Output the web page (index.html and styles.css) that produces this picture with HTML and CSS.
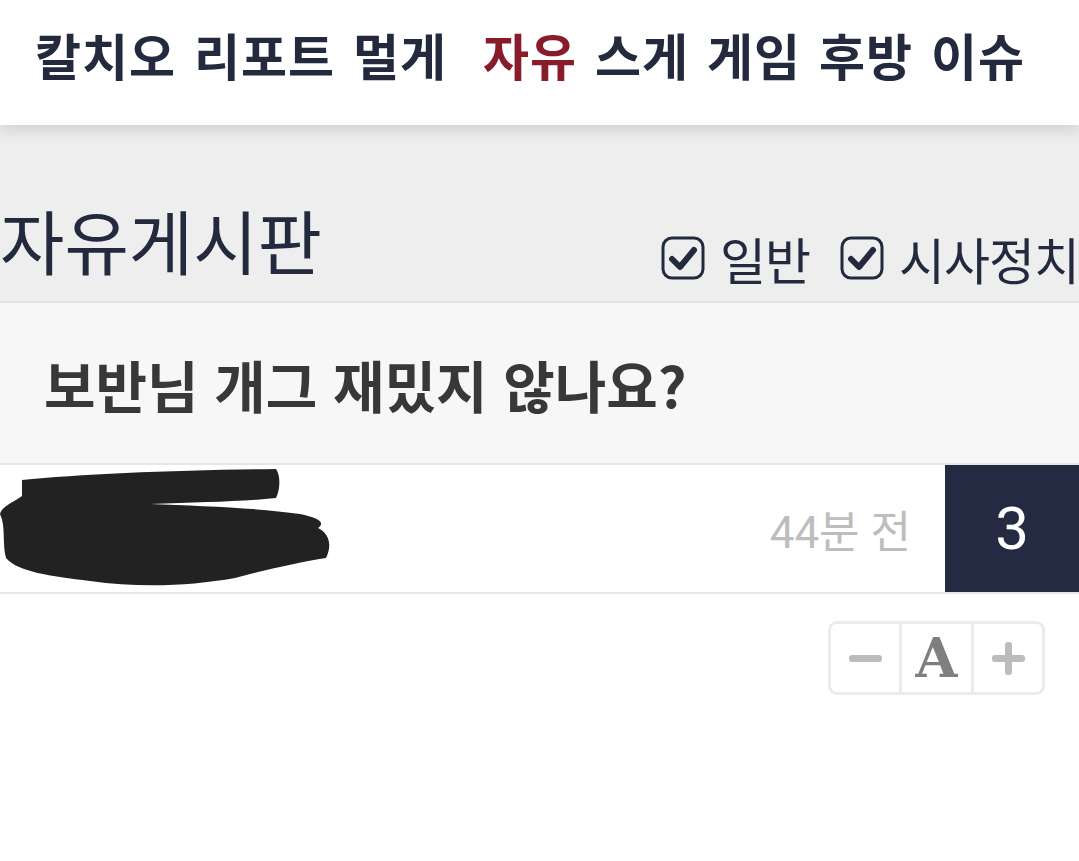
FILE: index.html
```html
<!DOCTYPE html>
<html lang="ko">
<head>
  <meta charset="UTF-8" />
  <meta name="viewport" content="width=device-width, initial-scale=1.0" />
  <title>자유게시판</title>
  <link rel="stylesheet" href="styles.css">
</head>
<body>
  <header class="topnav">
    <a href="#">칼치오</a>
    <a href="#">리포트</a>
    <a href="#">멀게</a>
    <a href="#" class="active">자유</a>
    <a href="#">스게</a>
    <a href="#">게임</a>
    <a href="#">후방</a>
    <a href="#">이슈</a>
  </header>

  <section class="board-head">
    <h1>자유게시판</h1>
    <div class="filters">
      <label class="check">
        <svg viewBox="0 0 44 44" width="44" height="44"><rect x="2" y="2" width="40" height="40" rx="9" fill="none" stroke="#232a3e" stroke-width="3"/><path d="M11 23 L19 31 L33 14" fill="none" stroke="#232a3e" stroke-width="6" stroke-linecap="round" stroke-linejoin="round"/></svg>
        <span>일반</span>
      </label>
      <label class="check">
        <svg viewBox="0 0 44 44" width="44" height="44"><rect x="2" y="2" width="40" height="40" rx="9" fill="none" stroke="#232a3e" stroke-width="3"/><path d="M11 23 L19 31 L33 14" fill="none" stroke="#232a3e" stroke-width="6" stroke-linecap="round" stroke-linejoin="round"/></svg>
        <span>시사정치</span>
      </label>
    </div>
  </section>

  <div class="post-title">
    <h2>보반님 개그 재밌지 않나요?</h2>
  </div>

  <div class="post-meta">
    <div class="author">
      <svg viewBox="0 0 340 125" width="340" height="125"><path d="M22 14 C80 8 180 4 276 3 C281 10 280 24 276 32 C240 36 200 36 150 38 C200 40 260 42 300 48 C318 52 326 56 318 62 C330 68 332 80 326 92 C300 96 265 104 235 112 C190 120 140 122 90 115 C50 110 18 106 6 92 C2 78 6 60 0 48 C2 40 14 36 22 30 Z" fill="#222"/></svg>
    </div>
    <span class="time">44분 전</span>
    <span class="count">3</span>
  </div>

  <div class="font-tools">
    <button class="minus" aria-label="작게"><span></span></button>
    <button class="letter">A</button>
    <button class="plus" aria-label="크게"><span></span></button>
  </div>
</body>
</html>
```

FILE: styles.css
```css
* {
  margin: 0;
  padding: 0;
  box-sizing: border-box;
}

body {
  font-family: "Noto Sans CJK KR", "Noto Sans", sans-serif;
  background: #fff;
  color: #232a3e;
  width: 1079px;
  overflow: hidden;
}

.topnav {
  height: 125px;
  display: flex;
  align-items: center;
  gap: 18px;
  padding: 0 0 18px 35px;
  background: #fff;
  position: relative;
  z-index: 2;
  box-shadow: 0 6px 14px rgba(0, 0, 0, 0.12);
}

.topnav a {
  font-size: 50px;
  font-weight: 700;
  color: #232a3e;
  text-decoration: none;
  white-space: nowrap;
  letter-spacing: 1px;
}

.topnav a.active {
  color: #8a1b2b;
  margin-left: 18px;
}

.board-head {
  background: #eeeeef;
  height: 178px;
  display: flex;
  align-items: flex-end;
  justify-content: space-between;
  padding-bottom: 14px;
  border-bottom: 2px solid #e3e3e3;
}

.board-head h1 {
  font-size: 70px;
  font-weight: 400;
  line-height: 1;
  margin-bottom: 12px;
  letter-spacing: 0;
}

.filters {
  display: flex;
  gap: 30px;
  white-space: nowrap;
  margin-bottom: 4px;
}

.check {
  display: flex;
  align-items: center;
  gap: 15px;
  font-size: 50px;
  line-height: 1;
  letter-spacing: -1px;
}

.post-title {
  background: #f7f7f7;
  height: 162px;
  display: flex;
  align-items: center;
  padding-left: 44px;
  border-bottom: 2px solid #e6e6e6;
}

.post-title h2 {
  font-size: 56px;
  font-weight: 700;
  color: #383838;
  letter-spacing: 0;
}

.post-meta {
  height: 129px;
  display: flex;
  align-items: center;
  border-bottom: 2px solid #e6e6e6;
}

.author {
  flex: 1;
  height: 100%;
  display: flex;
  align-items: center;
}

.time {
  font-size: 44px;
  color: #bdbdbd;
  margin-right: 34px;
  font-family: "Roboto", "Noto Sans CJK KR", sans-serif;
}

.count {
  width: 134px;
  height: 100%;
  background: #232a42;
  color: #fff;
  font-size: 60px;
  font-family: "Roboto", sans-serif;
  display: flex;
  align-items: center;
  justify-content: center;
}

.font-tools {
  display: flex;
  width: 217px;
  height: 74px;
  margin: 27px 34px 0 auto;
  border: 3px solid #ebebeb;
  border-radius: 9px;
  overflow: hidden;
}

.font-tools button {
  background: #fff;
  border: none;
  display: flex;
  align-items: center;
  justify-content: center;
}

.font-tools .minus,
.font-tools .plus {
  width: 68px;
}

.font-tools .letter {
  flex: 1;
  border-left: 3px solid #ebebeb;
  border-right: 3px solid #ebebeb;
  font-family: "DejaVu Serif", serif;
  font-weight: 700;
  font-size: 54px;
  line-height: 1;
  color: #7f7f7f;
}

.minus span,
.plus span {
  display: block;
  width: 33px;
  height: 7px;
  background: #bcbcbc;
  border-radius: 3px;
  position: relative;
}

.plus span::after {
  content: "";
  position: absolute;
  left: 13px;
  top: -13px;
  width: 7px;
  height: 33px;
  background: #bcbcbc;
  border-radius: 3px;
}
```
